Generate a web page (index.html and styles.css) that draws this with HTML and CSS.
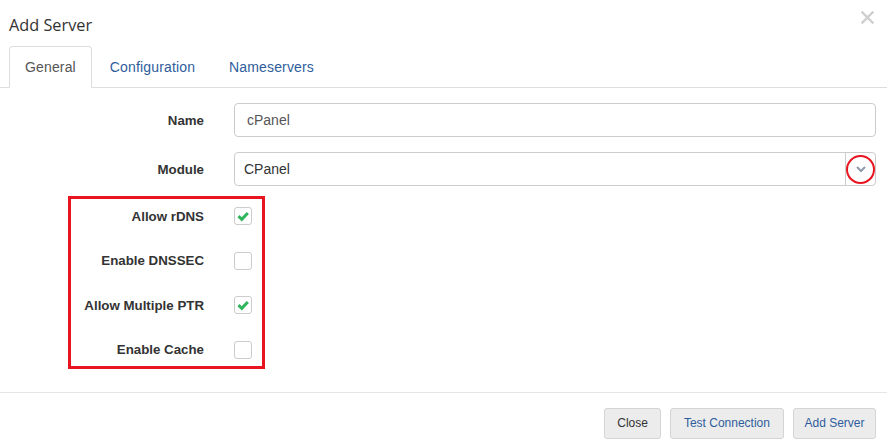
FILE: index.html
```html
<!DOCTYPE html>
<html>
<head>
<meta charset="utf-8">
<link rel="stylesheet" href="styles.css">
</head>
<body>
<div class="modal">
  <div class="modal-header">
    <h4 class="modal-title">Add Server</h4>
    <svg class="close" width="13" height="13" viewBox="0 0 13 13"><path d="M1.5 1.5 L11.5 11.5 M11.5 1.5 L1.5 11.5" stroke="#cfcfcf" stroke-width="2.4" stroke-linecap="square"/></svg>
  </div>
  <ul class="nav-tabs">
    <li class="active"><a>General</a></li>
    <li><a>Configuration</a></li>
    <li><a>Nameservers</a></li>
  </ul>
  <div class="modal-body">
    <div class="form-row">
      <label class="control-label">Name</label>
      <div class="form-control">cPanel</div>
    </div>
    <div class="form-row">
      <label class="control-label">Module</label>
      <div class="select">
        <span class="select-value">CPanel</span>
        <span class="select-arrow">
          <svg width="12" height="8" viewBox="0 0 12 8"><path d="M2 2 L6 6 L10 2" fill="none" stroke="#8e9aab" stroke-width="2"/></svg>
          <span class="annot-circle"></span>
        </span>
      </div>
    </div>
    <div class="check-group">
      <div class="check-row">
        <label class="control-label">Allow rDNS</label>
        <span class="checkbox checked"><svg width="16" height="16" viewBox="0 0 16 16"><path d="M3.5 8.2 L6.8 11.3 L12.8 5" fill="none" stroke="#2fb55b" stroke-width="3"/></svg></span>
      </div>
      <div class="check-row">
        <label class="control-label">Enable DNSSEC</label>
        <span class="checkbox"></span>
      </div>
      <div class="check-row">
        <label class="control-label">Allow Multiple PTR</label>
        <span class="checkbox checked"><svg width="16" height="16" viewBox="0 0 16 16"><path d="M3.5 8.2 L6.8 11.3 L12.8 5" fill="none" stroke="#2fb55b" stroke-width="3"/></svg></span>
      </div>
      <div class="check-row">
        <label class="control-label">Enable Cache</label>
        <span class="checkbox"></span>
      </div>
      <div class="annot-box"></div>
    </div>
  </div>
  <div class="modal-footer">
    <button class="btn">Close</button>
    <button class="btn btn-link btn-test">Test Connection</button>
    <button class="btn btn-link btn-add">Add Server</button>
  </div>
</div>
</body>
</html>
```
FILE: styles.css
```css
* { box-sizing: border-box; }
html, body { margin: 0; padding: 0; background: #fff; }
body { font-family: "Liberation Sans", Arial, sans-serif; color: #333; width: 887px; height: 448px; overflow: hidden; }

.modal-header {
  display: flex;
  justify-content: space-between;
  align-items: flex-start;
  padding: 13px 13px 9px 9px;
  height: 46px;
}
.modal-title {
  margin: 0;
  font-family: "Open Sans", sans-serif;
  font-weight: 400;
  font-size: 16.3px;
  line-height: 24px;
  color: #333;
}
.close { margin-top: -2px; }

.nav-tabs {
  list-style: none;
  margin: 0;
  padding: 0 0 0 9px;
  display: flex;
  border-bottom: 1px solid #ddd;
}
.nav-tabs li { margin-bottom: -1px; margin-right: 2px; }
.nav-tabs a {
  display: block;
  padding: 10px 15px;
  line-height: 20px;
  font-size: 14px;
  letter-spacing: 0.15px;
  color: #2f5d9c;
  border: 1px solid transparent;
  border-radius: 4px 4px 0 0;
}
.nav-tabs li.active a {
  color: #555;
  background: #fff;
  border-color: #ddd #ddd transparent;
}

.modal-body { padding: 15px 11px 27px 0; }
.form-row {
  display: grid;
  grid-template-columns: 204px 1fr;
  column-gap: 30px;
  align-items: center;
  margin-bottom: 15px;
}
.control-label {
  text-align: right;
  font-weight: bold;
  font-size: 13.3px;
  color: #333;
}
.form-control {
  height: 34px;
  border: 1px solid #ccc;
  border-radius: 4px;
  padding: 0 12px;
  font-size: 14px;
  line-height: 32px;
  color: #555;
}
.select {
  height: 34px;
  display: flex;
  border: 1px solid #ccc;
  border-radius: 4px;
  font-size: 14px;
  line-height: 32px;
  color: #333;
}
.select-value { flex: 1; padding-left: 9px; }
.select-arrow {
  position: relative;
  width: 30px;
  border-left: 1px solid #ccc;
  display: flex;
  align-items: center;
  justify-content: center;
}
.annot-circle {
  position: absolute;
  left: 0px;
  top: 2px;
  width: 29px;
  height: 29px;
  border: 2.5px solid #e8141f;
  border-radius: 50%;
}

.check-group {
  position: relative;
  display: flex;
  flex-direction: column;
  gap: 14.67px;
}
.check-row {
  display: grid;
  grid-template-columns: 204px 1fr;
  column-gap: 30px;
  align-items: center;
  height: 30px;
}
.checkbox {
  width: 18px;
  height: 18px;
  border: 1px solid #ccc;
  border-radius: 3px;
  display: flex;
  align-items: center;
  justify-content: center;
  background: #fff;
}
.annot-box {
  position: absolute;
  left: 68px;
  top: -5px;
  width: 197px;
  height: 173px;
  border: 3px solid #e8141f;
}

.modal-footer {
  border-top: 1px solid #e5e5e5;
  padding: 15px 11px 15px 10px;
  display: flex;
  justify-content: flex-end;
  gap: 9px;
}
.btn {
  font-family: "Liberation Sans", Arial, sans-serif;
  font-size: 12px;
  line-height: 17px;
  padding: 6px 12px;
  border: 1px solid #d4d4d4;
  border-radius: 3px;
  background: #ececec;
  color: #333;
}
.btn-link { color: #2f5d9c; }
.btn-test { padding: 6px 13px; }
.btn-add { padding: 6px 10.5px; }
```
